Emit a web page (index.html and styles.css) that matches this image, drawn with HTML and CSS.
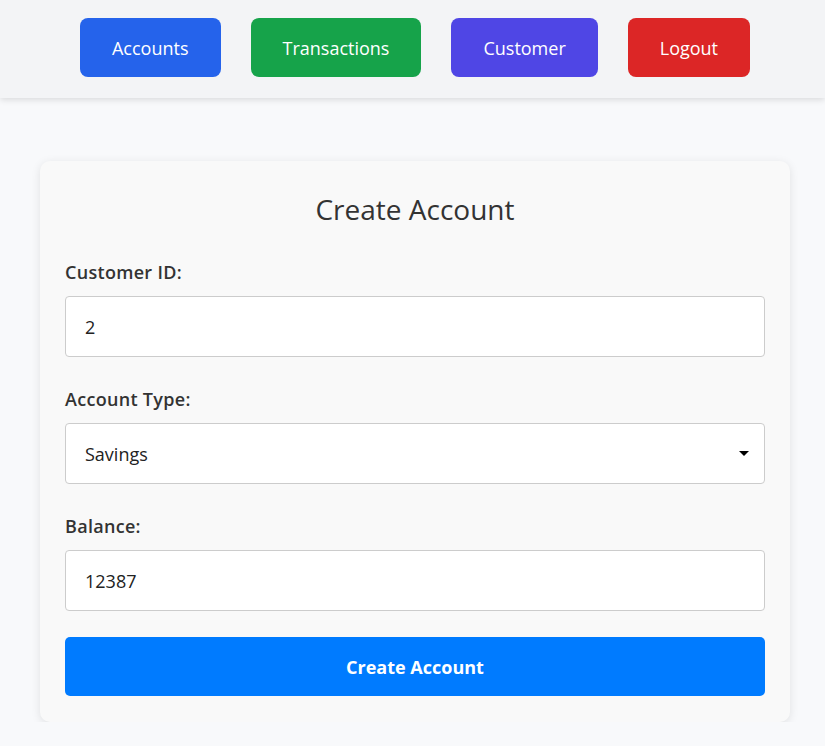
FILE: index.html
```html
<!DOCTYPE html>
<html lang="en">
<head>
<meta charset="utf-8">
<title>Create Account</title>
<link rel="stylesheet" href="styles.css">
</head>
<body>
<nav class="navbar">
  <a class="nav-btn nav-accounts">Accounts</a>
  <a class="nav-btn nav-transactions">Transactions</a>
  <a class="nav-btn nav-customer">Customer</a>
  <a class="nav-btn nav-logout">Logout</a>
</nav>
<main class="main">
  <form class="card">
    <h2 class="title">Create Account</h2>
    <div class="group">
      <label class="label">Customer ID:</label>
      <input class="field" type="text" value="2">
    </div>
    <div class="group">
      <label class="label">Account Type:</label>
      <div class="select-wrap">
        <select class="field select">
          <option>Savings</option>
          <option>Current</option>
        </select>
      </div>
    </div>
    <div class="group last">
      <label class="label">Balance:</label>
      <input class="field" type="text" value="12387">
    </div>
    <button class="submit" type="button">Create Account</button>
  </form>
</main>
</body>
</html>
```

FILE: styles.css
```css
* { box-sizing: border-box; }

body {
  margin: 0;
  background: #f8f9fb;
  font-family: "Open Sans", "Noto Sans", sans-serif;
  color: #333;
}

.navbar {
  height: 98px;
  display: flex;
  justify-content: center;
  align-items: flex-start;
  gap: 30px;
  padding: 18px 0 0 5px;
  background: #f3f4f6;
  box-shadow: 0 2px 6px rgba(0, 0, 0, 0.12);
}

.nav-btn {
  height: 59px;
  display: flex;
  align-items: center;
  padding: 0 32px;
  border-radius: 8px;
  color: #fff;
  font-size: 18px;
  text-decoration: none;
}

.nav-accounts { background: #2563eb; }
.nav-transactions { background: #16a34a; }
.nav-customer { background: #4f46e5; }
.nav-logout { background: #dc2626; }

.main {
  padding: 63px 35px 0 40px;
}

.card {
  background: #f9f9f9;
  border-radius: 10px;
  padding: 25px 25px 26px;
  box-shadow: 0 2px 10px rgba(0, 0, 0, 0.1);
}

.title {
  margin: 0 0 28px;
  font-size: 28px;
  line-height: 46px;
  font-weight: 400;
  text-align: center;
  color: #333;
}

.group {
  margin-bottom: 30px;
}

.group.last {
  margin-bottom: 26px;
}

.label {
  display: block;
  margin-bottom: 12px;
  font-size: 18px;
  line-height: 24px;
  font-weight: 600;
  letter-spacing: 0.3px;
  color: #333;
}

.field {
  display: block;
  width: 100%;
  height: 61px;
  padding: 0 19px;
  border: 1px solid #ccc;
  border-radius: 4px;
  background: #fff;
  font-family: inherit;
  font-size: 18px;
  color: #222;
}

.select-wrap {
  position: relative;
}

.select {
  appearance: none;
  -webkit-appearance: none;
}

.select-wrap::after {
  content: "";
  position: absolute;
  right: 16px;
  top: 28px;
  border-left: 5px solid transparent;
  border-right: 5px solid transparent;
  border-top: 5px solid #000;
  pointer-events: none;
}

.submit {
  display: block;
  width: 100%;
  height: 59px;
  border: none;
  border-radius: 5px;
  background: #007bff;
  color: #fff;
  font-family: inherit;
  font-size: 18px;
  font-weight: 700;
}
```
